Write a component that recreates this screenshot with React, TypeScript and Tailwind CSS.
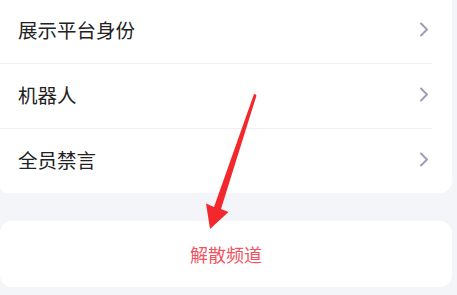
import React from 'react';

const ROWS = ['展示平台身份', '机器人', '全员禁言'];

const FONT = { fontFamily: '"Noto Sans CJK SC", "Noto Sans", sans-serif' };

function Chevron() {
  return (
    <svg width="10" height="15" viewBox="0 0 10 15" fill="none" className="shrink-0">
      <polyline points="2,1.5 8,7.5 2,13.5" stroke="#9c9eb3" strokeWidth="2" strokeLinecap="round" strokeLinejoin="round" />
    </svg>
  );
}

export default function App() {
  return (
    <div className="relative h-[295px] w-[457px] overflow-hidden bg-[#f4f5f9]" style={FONT}>
      <div className="mt-[-1px] mr-[5px] rounded-bl-md rounded-br-xl bg-white">
        {ROWS.map((label, i) => (
          <div key={label}>
            <div className="flex h-[64px] items-center justify-between pb-[3px] pl-[18px] pr-[23px]">
              <span className="text-[19.5px] leading-none text-[#222222]">{label}</span>
              <Chevron />
            </div>
            {i < ROWS.length - 1 && <div className="mr-[20px] h-px bg-[#efeff3]" />}
          </div>
        ))}
      </div>

      <div className="mt-[28px] mr-[5px] flex h-[66px] items-center justify-center rounded-xl bg-white">
        <span className="text-[18px] leading-none text-[#f2535e]">解散频道</span>
      </div>

      <svg className="pointer-events-none absolute left-0 top-0" width="457" height="295" viewBox="0 0 457 295">
        <polygon
          points="255,94 256.5,95.5 221,209 228.5,212 210,229 206,203.5 214,207 254,94"
          fill="#f3282d"
        />
      </svg>
    </div>
  );
}
